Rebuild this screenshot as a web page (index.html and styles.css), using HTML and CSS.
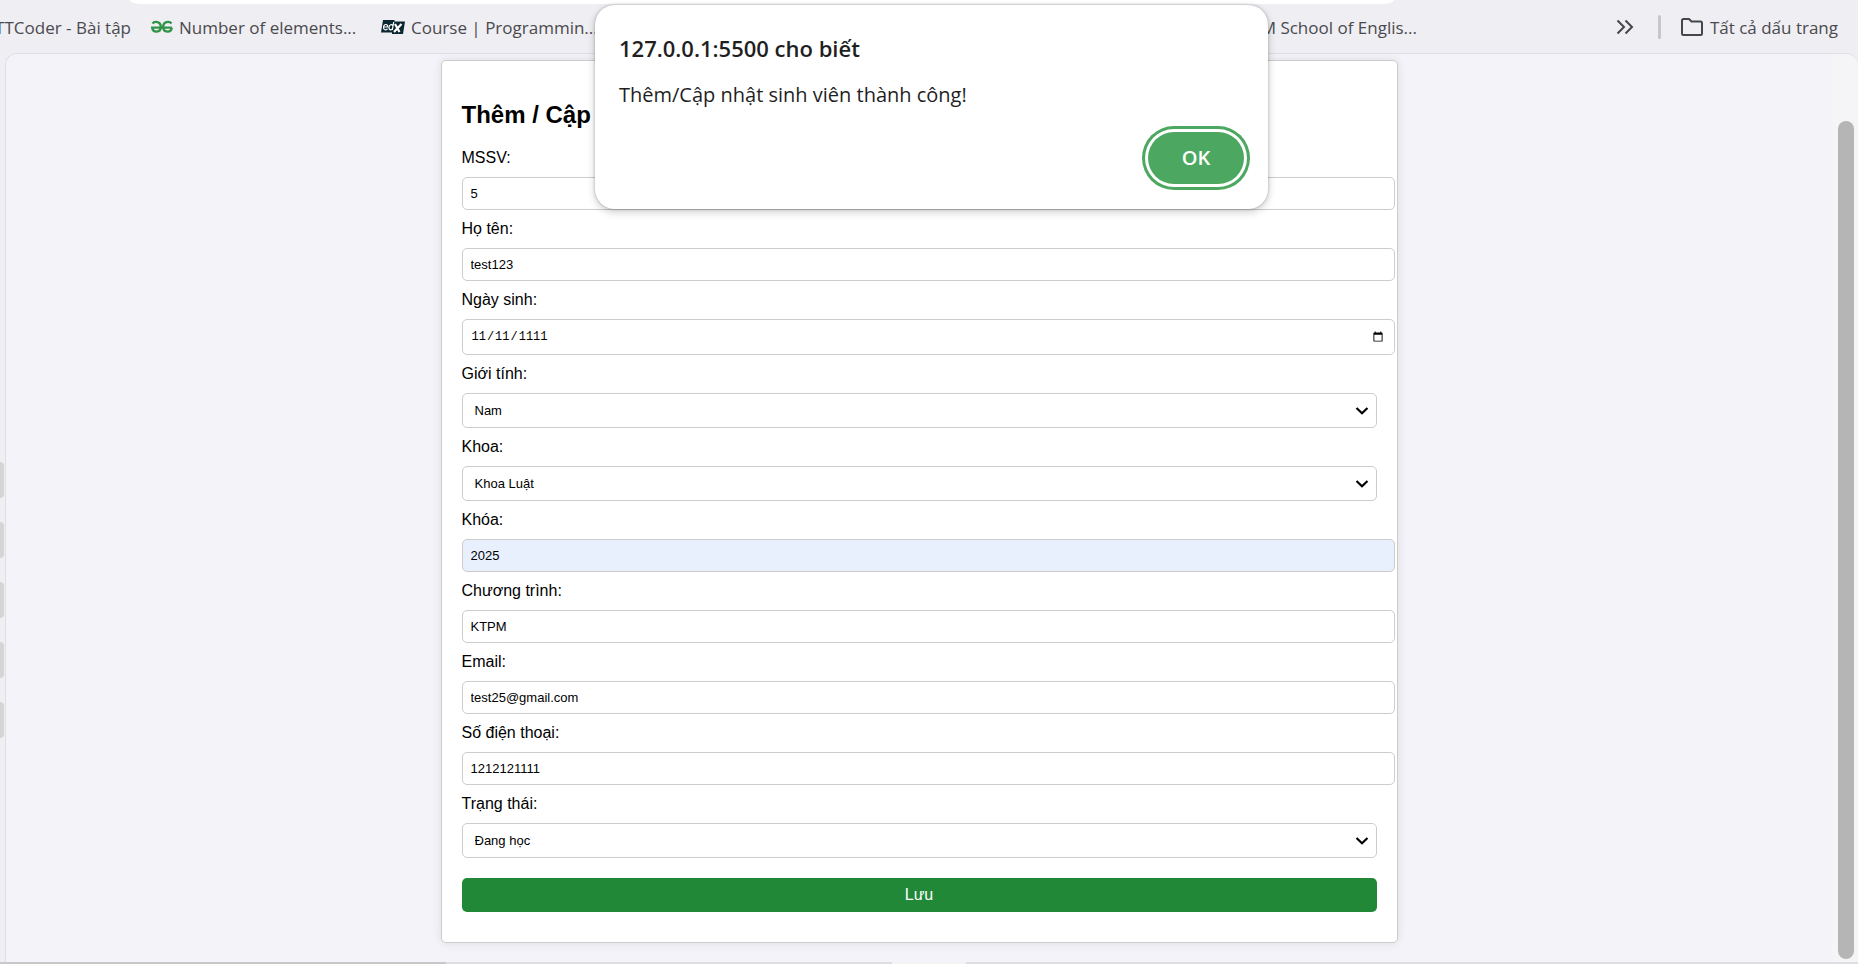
FILE: index.html
```
<!DOCTYPE html>
<html lang="vi">
<head>
<meta charset="utf-8">
<title>Quản lý sinh viên</title>
<link rel="stylesheet" href="styles.css">
</head>
<body>
<header class="toolbar">
  <div class="omnibox"></div>
  <nav class="bookmarks">
    <a class="bookmark bookmark-first" href="#"><span>TTCoder - Bài tập</span></a>
    <a class="bookmark" href="#">
      <svg class="bookmark-icon" width="22" height="14" viewBox="0 0 22 14" fill="none" stroke="#2f9447" stroke-width="2.4"><path d="M1.500 3.400C3.500 1 9.800 1 9.800 7c0 6-8 6-8.600.6H20.800"/><path d="M20.500 3.400C18.500 1 12.200 1 12.200 7c0 6 8 6 8.600.6"/></svg>
      <span>Number of elements...</span>
    </a>
    <a class="bookmark" href="#">
      <svg class="bookmark-icon" width="24" height="14" viewBox="0 0 24 14"><path d="M2 0h11.500v1.500H24L22 14H11v-1.500H0z" fill="#0b2830"/><g fill="none" stroke="#fff" stroke-width="1.200"><path d="M2.500 7h4.300C7 3.600 3 3.800 2.500 7c-.4 3.300 3 3.500 4 1.800"/><path d="M12.700 2 11.300 10M12 6c-1-2.300-4-1.500-4 1.500 0 3.300 3.300 3 3.700.3"/></g><path d="m14 4 4.500 8M20.500 4 13 12" stroke="#fff" stroke-width="2.200"/></svg>
      <span>Course | Programmin...</span>
    </a>
    <a class="bookmark bookmark-last" href="#"><span>HCM School of Englis...</span></a>
    <div class="bookmark-tools">
      <button class="icon-button" type="button" aria-label="Dấu trang khác">
        <svg width="18" height="16" viewBox="0 0 18 16" fill="none" stroke="#45464a" stroke-width="2"><path d="m1.500 1.500 6.500 6.500-6.500 6.500M9.500 1.500 16 8l-6.500 6.500"/></svg>
      </button>
      <span class="divider"></span>
      <a class="bookmark-all" href="#">
        <svg width="22" height="18" viewBox="0 0 22 18" fill="none" stroke="#45464a" stroke-width="2" stroke-linejoin="round"><path d="M1 2.500Q1 1 2.500 1H8l2.500 2.500h9Q21 3.500 21 5v10.500q0 1.500-1.500 1.500h-17Q1 17 1 15.500z"/></svg>
        <span>Tất cả dấu trang</span>
      </a>
    </div>
  </nav>
</header>
<div class="workspace">
  <div class="rail"><i></i><i></i><i></i><i></i><i></i></div>
  <main class="page">
    <form class="card">
      <h2>Thêm / Cập nhật Sinh Viên</h2>
      <label for="mssv">MSSV:</label>
      <input id="mssv" type="text" value="5">
      <label for="name">Họ tên:</label>
      <input id="name" type="text" value="test123">
      <label for="dob">Ngày sinh:</label>
      <input id="dob" type="date" lang="vi" value="1111-11-11">
      <label for="gender">Giới tính:</label>
      <select id="gender"><option>Nam</option></select>
      <label for="faculty">Khoa:</label>
      <select id="faculty"><option>Khoa Luật</option></select>
      <label for="course">Khóa:</label>
      <input id="course" class="autofilled" type="text" value="2025">
      <label for="program">Chương trình:</label>
      <input id="program" type="text" value="KTPM">
      <label for="email">Email:</label>
      <input id="email" type="email" value="test25@gmail.com">
      <label for="phone">Số điện thoại:</label>
      <input id="phone" type="tel" value="1212121111">
      <label for="status">Trạng thái:</label>
      <select id="status"><option>Đang học</option></select>
      <button class="save" type="submit">Lưu</button>
    </form>
  </main>
  <div class="scrollbar"><div class="thumb"></div></div>
</div>
<footer class="edge"><i class="edge-dark"></i><i class="edge-mid"></i><i class="edge-light"></i><i class="edge-rest"></i></footer>
<div class="dialog" role="alertdialog" aria-labelledby="dialog-title">
  <h1 id="dialog-title">127.0.0.1:5500 cho biết</h1>
  <p>Thêm/Cập nhật sinh viên thành công!</p>
  <button class="ok" type="button">OK</button>
</div>
</body>
</html>
```
FILE: styles.css
```
* { box-sizing: border-box; }

body {
  margin: 0;
  min-height: 100vh;
  display: flex;
  flex-direction: column;
  background: #efeef3;
  font-family: "Liberation Sans", Arial, sans-serif;
  font-size: 16px;
  color: #000;
  position: relative;
  overflow: hidden;
}

/* Browser toolbar */
.toolbar {
  height: 53px;
  font-family: "Open Sans", "Noto Sans", sans-serif;
  font-size: 17px;
  color: #4a4a4e;
}
.omnibox {
  height: 4px;
  margin: 0 25% 0 7%;
  background: #fff;
  border-radius: 0 0 12px 12px / 0 0 4px 4px;
}
.bookmarks {
  display: flex;
  align-items: center;
  height: 46px;
  white-space: nowrap;
}
.bookmark, .bookmark-all {
  display: flex;
  align-items: center;
  color: inherit;
  text-decoration: none;
}
.bookmark { flex: 0 0 230px; gap: 6px; }
.bookmark-icon { flex: none; }
.bookmark-first {
  flex-basis: 131px;
  min-width: 0;
  margin-right: 20px;
  justify-content: flex-end;
}
.bookmark-last { flex-basis: 806px; justify-content: flex-end; }
.bookmark-tools {
  display: flex;
  align-items: center;
  margin-left: auto;
  padding-right: 20px;
}
.icon-button {
  display: flex;
  padding: 0;
  border: 0;
  background: none;
}
.divider {
  width: 3px;
  height: 24px;
  margin: 0 20px 0 24px;
  border-radius: 2px;
  background: #c7c7ca;
}
.bookmark-all { gap: 7px; }

/* Content area */
.workspace { flex: 1; display: flex; }
.rail {
  width: 5px;
  padding-top: 409px;
  display: flex;
  flex-direction: column;
  gap: 24px;
}
.rail i {
  width: 4px;
  height: 36px;
  background: #d5d5d5;
  border-radius: 0 4px 4px 0;
}
.page {
  flex: 1;
  padding: 6px 0 19px;
  background: #f4f3f9;
  border: solid #e0e0e4;
  border-width: 1px 0 0 1px;
  border-top-left-radius: 12px;
}
.scrollbar {
  width: 26px;
  padding: 67px 4px 3px 6px;
  display: flex;
  background: #f5f5f7;
  border-top: 1px solid #e0e0e4;
  border-top-right-radius: 12px;
}
.thumb { flex: 1; border-radius: 8px; background: #b5b5b5; }

/* Student form */
.card {
  box-sizing: content-box;
  width: calc(50% + 2px);
  margin: 0 auto;
  padding: 20px;
  border: 1px solid #ccc;
  border-radius: 5px;
  background: #fff;
  box-shadow: 0 0 10px rgba(0, 0, 0, 0.1);
}
.card h2 { margin: 20px 0; font-size: 24px; line-height: 28px; }
.card label { display: block; line-height: 18px; }
.card input, .card select {
  display: block;
  width: 100%;
  margin: 10px 0;
  padding: 8px;
  border: 1px solid #ccc;
  border-radius: 5px;
  background-color: #fff;
  font-family: inherit;
  font-size: 13px;
  color: #000;
}
.card input {
  box-sizing: content-box;
  height: 15px;
}
.card input[type="date"] {
  height: 18px;
  font-family: "Liberation Mono", monospace;
  font-size: 12px;
}
.card select {
  height: 35px;
  padding: 8px 32px 8px 12px;
  appearance: none;
  background-image: url("data:image/svg+xml,%3Csvg xmlns='http://www.w3.org/2000/svg' width='14' height='10' viewBox='0 0 14 10'%3E%3Cpath d='M1.500 2 7 7.200 12.500 2' fill='none' stroke='%23000' stroke-width='2.200'/%3E%3C/svg%3E");
  background-repeat: no-repeat;
  background-position: right 7px center;
}
.card .autofilled { background-color: #e8f0fe; }
.save {
  display: block;
  width: 100%;
  height: 34px;
  margin: 20px 0 10px;
  border: 0;
  border-radius: 5px;
  background: #218838;
  color: #fff;
  font-family: inherit;
  font-size: 16px;
}

/* Bottom window edge */
.edge { height: 2px; display: flex; }
.edge-dark { width: 24%; background: #c8c8c8; }
.edge-mid { width: 24%; background: #dedee1; }
.edge-light { width: 4%; background: #f3f3f3; }
.edge-rest { flex: 1; background: #dedee1; }

/* Alert dialog */
.dialog {
  position: absolute;
  top: 5px;
  left: 595px;
  width: 673px;
  height: 204px;
  padding: 24px 24px 25px;
  display: flex;
  flex-direction: column;
  border-radius: 20px;
  background: #fff;
  box-shadow: 0 0 3px rgba(0, 0, 0, 0.25), 0 3px 8px rgba(0, 0, 0, 0.2);
  font-family: "Open Sans", "Noto Sans", sans-serif;
  color: #1f1f1f;
}
.dialog h1 { margin: 4px 0 18px; font-size: 22px; line-height: 30px; font-weight: 600; }
.dialog p { margin: 0; font-size: 20px; line-height: 28px; }
.ok {
  width: 96px;
  height: 52px;
  margin: auto 0 0 auto;
  flex: none;
  padding: 0 0 2px;
  border: 0;
  border-radius: 26px;
  background: #4ca860;
  box-shadow: 0 0 0 3px #fff, 0 0 0 6px #4ca860;
  color: #fff;
  font-family: inherit;
  font-size: 20px;
  font-weight: 600;
}
```
